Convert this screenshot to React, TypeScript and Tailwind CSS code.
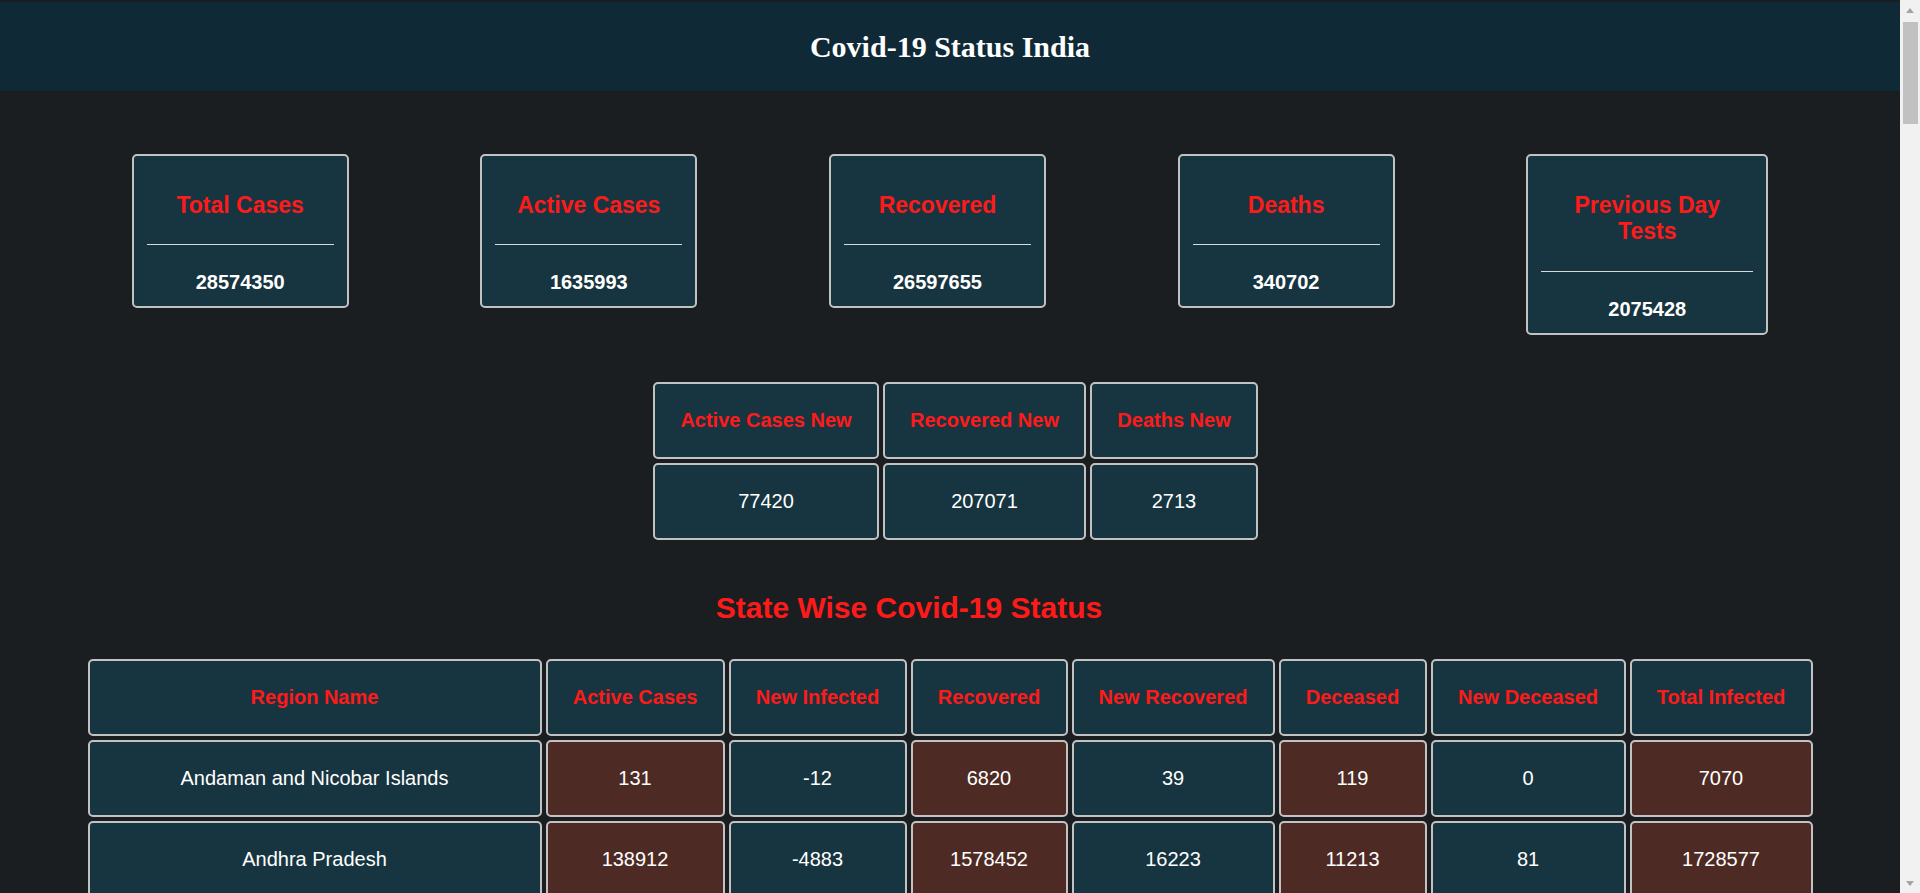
import React from "react";

const summary = [
  { title: "Total Cases", value: "28574350", w: "w-[217px]" },
  { title: "Active Cases", value: "1635993", w: "w-[217px]" },
  { title: "Recovered", value: "26597655", w: "w-[217px]" },
  { title: "Deaths", value: "340702", w: "w-[217px]" },
  { title: "Previous Day Tests", value: "2075428", w: "w-[242px]" },
];

const headers: { label: string; w: string }[] = [
  { label: "Region Name", w: "w-[454px]" },
  { label: "Active Cases", w: "w-[179px]" },
  { label: "New Infected", w: "w-[178px]" },
  { label: "Recovered", w: "w-[157px]" },
  { label: "New Recovered", w: "w-[203px]" },
  { label: "Deceased", w: "w-[148px]" },
  { label: "New Deceased", w: "w-[195px]" },
  { label: "Total Infected", w: "w-[183px]" },
];

const newHeaders: { label: string; w: string }[] = [
  { label: "Active Cases New", w: "w-[226px]" },
  { label: "Recovered New", w: "w-[203px]" },
  { label: "Deaths New", w: "w-[168px]" },
];

const rows: string[][] = [
  ["Andaman and Nicobar Islands", "131", "-12", "6820", "39", "119", "0", "7070"],
  ["Andhra Pradesh", "138912", "-4883", "1578452", "16223", "11213", "81", "1728577"],
];

const cellBase =
  "border-2 border-[#c2c2c2] rounded-[5px] px-0 py-[25px] text-center align-middle leading-[23px] text-[20px] whitespace-nowrap";

export default function App() {
  return (
    <div
      className="flex h-[893px] w-[1920px] overflow-hidden bg-[#1b1e20]"
      style={{ fontFamily: '"Liberation Sans", Arial, sans-serif' }}
    >
      <div className="flex-1 min-w-0">
        <div className="h-[2px] bg-[#1b1e20]" />
        <header className="h-[89px] bg-[#0f2a36] flex items-center justify-center">
          <h1
            className="text-[30px] font-bold text-white leading-[34px]"
            style={{ fontFamily: '"Liberation Serif", "Times New Roman", serif' }}
          >
            Covid-19 Status India
          </h1>
        </header>

        <div className="mt-[63px] flex justify-evenly items-start">
          {summary.map((c) => (
            <div
              key={c.title}
              className={`${c.w} border-2 border-[#c2c2c2] rounded-[5px] bg-[#173540] pt-[36px] pb-[12px] flex flex-col items-center`}
            >
              <div className="text-[23px] font-bold text-[#ff1a1a] text-center leading-[26.4px] px-[24px]">
                {c.title}
              </div>
              <div className="self-stretch mx-[13px] mt-[26px] mb-[26px] h-px bg-[#d9d9d9]" />
              <div className="text-[20px] font-bold text-white leading-[23px]">{c.value}</div>
            </div>
          ))}
        </div>

        <div className="mt-[43px] flex justify-center pl-[11px]">
          <table className="border-separate border-spacing-[4px] table-fixed">
            <thead>
              <tr>
                {newHeaders.map((h) => (
                  <th key={h.label} className={`${cellBase} ${h.w} bg-[#173540] text-[#ff1a1a] font-bold`}>
                    {h.label}
                  </th>
                ))}
              </tr>
            </thead>
            <tbody>
              <tr>
                {["77420", "207071", "2713"].map((v) => (
                  <td key={v} className={`${cellBase} bg-[#173540] text-white font-normal`}>
                    {v}
                  </td>
                ))}
              </tr>
            </tbody>
          </table>
        </div>

        <h2 className="mt-[47px] pr-[82px] text-center text-[30px] font-bold text-[#ff1a1a] leading-[34.5px]">
          State Wise Covid-19 Status
        </h2>

        <div className="mt-[30px] flex justify-center">
          <table className="border-separate border-spacing-[4px] table-fixed w-[1733px]">
            <thead>
              <tr>
                {headers.map((h) => (
                  <th key={h.label} className={`${cellBase} ${h.w} bg-[#173540] text-[#ff1a1a] font-bold`}>
                    {h.label}
                  </th>
                ))}
              </tr>
            </thead>
            <tbody>
              {rows.map((r) => (
                <tr key={r[0]}>
                  {r.map((v, i) => (
                    <td
                      key={i}
                      className={`${cellBase} ${
                        i % 2 === 1 ? "bg-[#4d2b24]" : "bg-[#173540]"
                      } text-white font-normal`}
                    >
                      {v}
                    </td>
                  ))}
                </tr>
              ))}
            </tbody>
          </table>
        </div>
      </div>

      <div className="w-[20px] h-full bg-[#f1f1f1] flex flex-col items-center shrink-0">
        <div className="h-[20px] w-full flex items-center justify-center">
          <svg width="8" height="5" viewBox="0 0 8 5">
            <path d="M0 5 L4 0 L8 5 Z" fill="#a3a3a3" />
          </svg>
        </div>
        <div className="w-[15px] h-[102px] bg-[#c1c1c1] mt-[2px]" />
        <div className="flex-1" />
        <div className="h-[20px] w-full flex items-center justify-center">
          <svg width="8" height="5" viewBox="0 0 8 5">
            <path d="M0 0 L4 5 L8 0 Z" fill="#a3a3a3" />
          </svg>
        </div>
      </div>
    </div>
  );
}
